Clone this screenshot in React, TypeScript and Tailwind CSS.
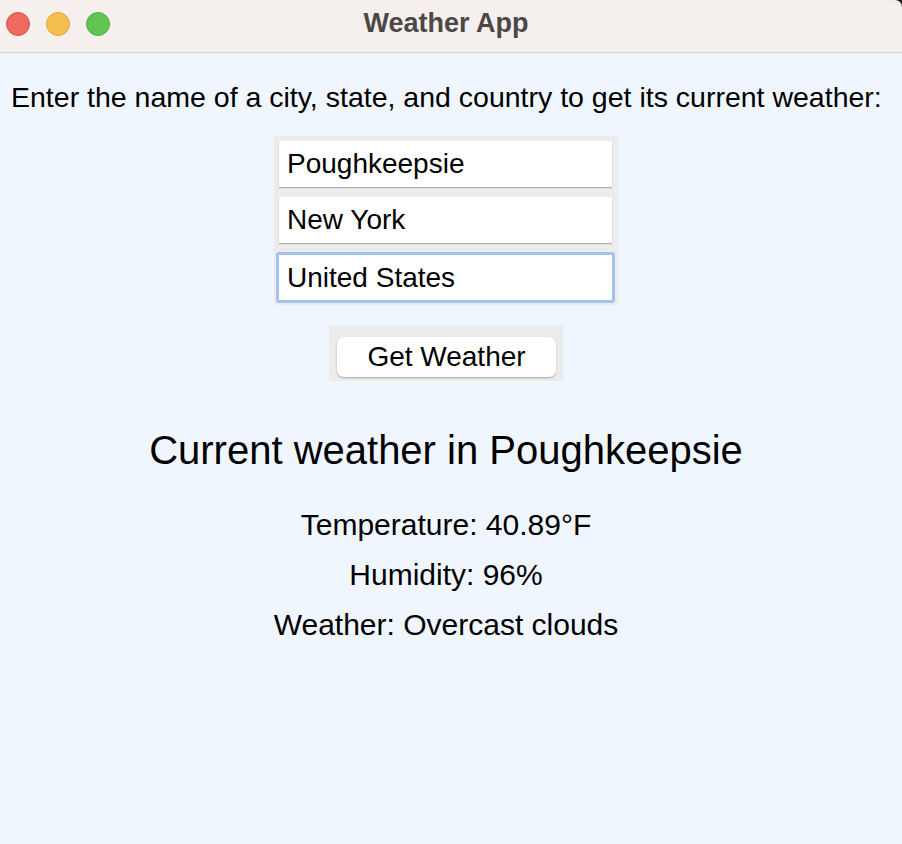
import React from "react";

const fields = ["Poughkeepsie", "New York", "United States"];

const App = () => {
  return (
    <div className="w-[902px] h-[844px] flex flex-col bg-[#f0f6fe] font-['Liberation_Sans',Arial,sans-serif] text-black overflow-hidden">
      {/* title bar */}
      <div className="relative h-[53px] shrink-0 flex justify-center pt-[7px] pr-[10px] bg-[#f5f0ee] border-b border-[#d3d3d6]">
        <div className="absolute left-[6px] top-[12px] flex gap-[16px]">
          <div className="w-[24px] h-[24px] rounded-full bg-[#ee6a5f] border border-[#d8534a]" />
          <div className="w-[24px] h-[24px] rounded-full bg-[#f5be4f] border border-[#dca33c]" />
          <div className="w-[24px] h-[24px] rounded-full bg-[#61c554] border border-[#4fae43]" />
        </div>
        <div className="text-[27px] leading-[32px] font-bold text-[#4b4747]">Weather App</div>
        {/* window corner */}
        <svg className="absolute right-0 top-0" width="7" height="7" viewBox="0 0 7 7">
          <path d="M0 0 H7 V7 A7 7 0 0 0 0 0Z" fill="#1a1a1a" />
        </svg>
      </div>

      <div className="flex flex-col items-center pr-[10px]">
        <div className="mt-[27px] text-[28.5px] leading-[34px] w-full pl-[11px] whitespace-nowrap">
          Enter the name of a city, state, and country to get its current weather:
        </div>

        <div className="mt-[22px] w-[344px] bg-[#ececec] pt-[5px] pb-[5px] pl-[5px] pr-[6px] flex flex-col gap-[10px]">
          {fields.map((f, i) =>
            i === 2 ? (
              <div
                key={f}
                className="-mx-[3px] -mt-[1px] -mb-[3px] h-[51px] bg-white border-[3px] border-[#a5c2ef] rounded-[3px] flex items-center px-[8px] text-[28px]"
              >
                {f}
              </div>
            ) : (
              <div
                key={f}
                className="h-[46px] bg-white shadow-[0_1px_1px_rgba(0,0,0,0.25)] flex items-center px-[8px] text-[28px]"
              >
                {f}
              </div>
            )
          )}
        </div>

        <div className="mt-[20px] w-[234px] h-[56px] bg-[#ececec] flex justify-center pt-[12px] pl-[1px]">
          <div className="w-[219px] h-[40px] bg-white rounded-[7px] shadow-[0_1px_2px_rgba(0,0,0,0.3)] flex items-center justify-center text-[28px]">
            Get Weather
          </div>
        </div>

        <div className="mt-[45px] text-[40px] leading-[48px]">Current weather in Poughkeepsie</div>

        <div className="mt-[33px] flex flex-col items-center gap-[14px] text-[30px] leading-[36px]">
          <div>Temperature: 40.89°F</div>
          <div>Humidity: 96%</div>
          <div>Weather: Overcast clouds</div>
        </div>
      </div>
    </div>
  );
};

export default App;
